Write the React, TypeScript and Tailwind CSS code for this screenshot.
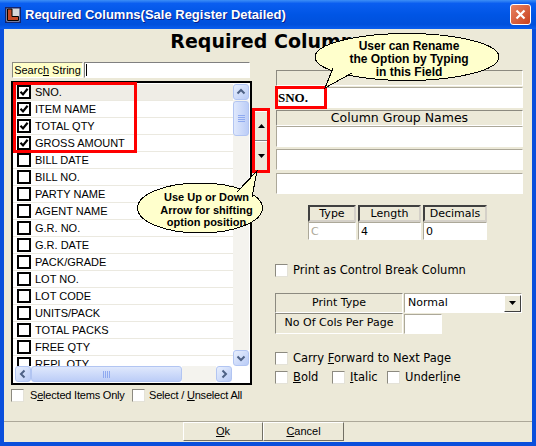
import React from "react";

const items = [
  "SNO.",
  "ITEM NAME",
  "TOTAL QTY",
  "GROSS AMOUNT",
  "BILL DATE",
  "BILL NO.",
  "PARTY NAME",
  "AGENT NAME",
  "G.R. NO.",
  "G.R. DATE",
  "PACK/GRADE",
  "LOT NO.",
  "LOT CODE",
  "UNITS/PACK",
  "TOTAL PACKS",
  "FREE QTY",
  "REPL QTY",
];

// sunken frame used by the edit boxes
const field = "border border-t-[#aca899] border-l-[#aca899] border-b-white border-r-white bg-white";
const label =
  "border border-t-[#8c8a80] border-l-[#8c8a80] border-b-white border-r-white bg-[#ece9d8] flex items-center justify-center";
const dv = "font-['DejaVu_Sans',Verdana,sans-serif]";

function ListCheck({ on }: { on: boolean }) {
  return (
    <span className="w-[14px] h-[14px] border-2 border-black bg-white flex items-center justify-center shrink-0">
      {on && (
        <svg width="10" height="10" viewBox="0 0 10 10">
          <path d="M1.5 4.8 L4 7.4 L8.6 1.8" stroke="black" strokeWidth="2.2" fill="none" />
        </svg>
      )}
    </span>
  );
}

function Check() {
  return (
    <span className="block w-[13px] h-[13px] bg-white border border-t-[#8c8a80] border-l-[#8c8a80] border-b-[#e4e2d8] border-r-[#e4e2d8] shrink-0" />
  );
}

function SbBtn({ dir }: { dir: "up" | "down" | "left" | "right" }) {
  const paths = {
    up: "M3.5 8.5 L7 5 L10.5 8.5",
    down: "M3.5 5.5 L7 9 L10.5 5.5",
    left: "M8.5 3.5 L5 7 L8.5 10.5",
    right: "M5.5 3.5 L9 7 L5.5 10.5",
  };
  return (
    <div className="w-[16px] h-[16px] shrink-0 rounded-[3px] border border-[#b2c5f2] bg-gradient-to-br from-[#e8effd] to-[#b9cbf6] flex items-center justify-center">
      <svg width="14" height="14" viewBox="0 0 14 14">
        <path d={paths[dir]} stroke="#4d6185" strokeWidth="2" fill="none" />
      </svg>
    </div>
  );
}

function Arrow({ up }: { up: boolean }) {
  return (
    <svg width="7" height="4" viewBox="0 0 7 4">
      <path d={up ? "M0 4 L3.5 0 L7 4 Z" : "M0 0 L7 0 L3.5 4 Z"} fill="black" />
    </svg>
  );
}

export default function App() {
  return (
    <div className="relative w-[536px] h-[446px] flex flex-col bg-[#0a4fdc] overflow-hidden font-['Liberation_Sans',Arial,sans-serif] text-black">
      {/* Title bar */}
      <div className="h-[29px] shrink-0 flex items-center pl-[5px] bg-[linear-gradient(to_bottom,#3d8ff6_0%,#0a5ef0_12%,#0055e5_50%,#0050dc_85%,#0a5ef0_100%)]">
        <svg width="16" height="16" viewBox="0 0 16 16">
          <rect x="0" y="0" width="16" height="16" fill="#16246a" />
          <rect x="1" y="1" width="14" height="14" fill="#d8d8d8" />
          <rect x="1" y="1" width="14" height="14" fill="none" stroke="#16246a" />
          <path d="M2.5 2 H7 V9.5 H13.5 V13.5 H2.5 Z" fill="#c44a26" stroke="#000" strokeWidth="1" />
        </svg>
        <span className="ml-[4px] text-white font-bold text-[13px] [text-shadow:1px_1px_0_#0b1f8a]">
          Required Columns(Sale Register Detailed)
        </span>
        <div className="ml-auto mr-[5px] w-[21px] h-[21px] rounded-[3px] border border-white bg-gradient-to-br from-[#e8825f] to-[#c8401c] flex items-center justify-center">
          <svg width="11" height="11" viewBox="0 0 11 11">
            <path d="M1.5 1.5 L9.5 9.5 M9.5 1.5 L1.5 9.5" stroke="white" strokeWidth="2.2" />
          </svg>
        </div>
      </div>

      {/* Body */}
      <div className="flex-1 mx-[4px] mb-[4px] bg-[#ece9d8] flex flex-col">
        <div className={`h-[33px] pt-[2px] text-center font-bold text-[19px] leading-[21px] ${dv}`}>
          Required Columns
        </div>

        <div className="flex items-start pl-[7px]">
          {/* Left column */}
          <div className="w-[241px] flex flex-col">
            <div className="flex h-[16px] ml-[1px]">
              <div className="w-[71px] bg-[#ffffc8] border border-t-[#8c8a80] border-l-[#8c8a80] border-b-white border-r-white flex items-center justify-center text-[11px]">
                Searc<span className="underline">h</span>&nbsp;String
              </div>
              <div className="w-[166px] ml-[1px] bg-white border border-t-[#808080] border-l-[#808080] border-b-white border-r-white flex items-center">
                <span className="ml-[1px] w-[1px] h-[12px] bg-black" />
              </div>
            </div>

            <div className="mt-[3px] h-[304px] border-2 border-black bg-white flex">
              <div className="flex-1 flex flex-col min-w-0">
                <div className="flex-1 overflow-hidden pt-[1px]">
                  {items.map((it, i) => (
                    <div
                      key={it}
                      className={`h-[17px] flex items-center pl-[4px] gap-[4px] border-b border-[#ebe9e0] text-[11px] whitespace-nowrap ${
                        i === 0 ? "bg-[#efede6]" : ""
                      }`}
                    >
                      <ListCheck on={i < 4} />
                      <span>{it}</span>
                    </div>
                  ))}
                </div>
                <div className="h-[16px] mb-[1px] pl-[2px] pr-[1px] flex">
                  <SbBtn dir="left" />
                  <div className="w-[151px] h-[16px] rounded-[3px] border border-[#b2c5f2] bg-gradient-to-b from-[#dfe8fc] to-[#bccdf7] flex items-center justify-center gap-[1px]">
                    {[0, 1, 2, 3].map((k) => (
                      <span key={k} className="w-[1px] h-[7px] bg-[#8faaf0]" />
                    ))}
                  </div>
                  <div className="flex-1 bg-[#f4f3ee]" />
                  <SbBtn dir="right" />
                </div>
              </div>
              <div className="w-[16px] mr-[1px] flex flex-col pt-[1px]">
                <SbBtn dir="up" />
                <div className="flex-1 bg-[#f4f3ee] flex flex-col">
                  <div className="mt-[1px] h-[35px] rounded-[3px] border border-[#b2c5f2] bg-gradient-to-r from-[#dfe8fc] to-[#bccdf7] flex flex-col items-center justify-center gap-[1px]">
                    {[0, 1, 2, 3].map((k) => (
                      <span key={k} className="w-[7px] h-[1px] bg-[#8faaf0]" />
                    ))}
                  </div>
                </div>
                <SbBtn dir="down" />
                <div className="h-[17px]" />
              </div>
            </div>

            <div className="mt-[4px] h-[13px] flex items-center text-[11px] whitespace-nowrap">
              <div className="w-[121px] flex items-center">
                <Check />
                <span className="ml-[6px] tracking-[-0.2px]">
                  S<span className="underline">e</span>lected Items Only
                </span>
              </div>
              <Check />
              <span className="ml-[4px] tracking-[-0.2px]">
                Select / <span className="underline">U</span>nselect All
              </span>
            </div>
          </div>

          {/* Up / Down buttons */}
          <div className="ml-[1px] w-[16px] mt-[49px] flex flex-col">
            <div className="h-[30px] bg-[#ece9d8] border border-t-white border-l-white border-b-[#808080] border-r-[#808080] flex items-center justify-center">
              <Arrow up />
            </div>
            <div className="h-[30px] bg-[#ece9d8] border border-t-white border-l-white border-b-[#808080] border-r-[#808080] flex items-center justify-center">
              <Arrow up={false} />
            </div>
          </div>

          {/* Right column */}
          <div className={`ml-[7px] w-[247px] mt-[8px] flex flex-col ${dv}`}>
            <div className={`h-[16px] ${label}`} />
            <div className={`mt-[1px] h-[21px] ${field} flex items-center pl-[1px]`}>
              <span className="font-['Liberation_Serif',serif] font-bold text-[13px]">SNO.</span>
            </div>
            <div className={`mt-[2px] h-[16px] ${label} text-[12.5px] leading-[14px]`}>Column Group Names</div>
            <div className={`h-[21px] ${field}`} />
            <div className={`mt-[2px] h-[21px] ${field}`} />
            <div className={`mt-[3px] h-[21px] ${field}`} />

            <div className="mt-[11px] ml-[32px] flex gap-[2px] text-[11px]">
              {[
                { h: "Type", v: "C", w: "w-[48px]" },
                { h: "Length", v: "4", w: "w-[63px]" },
                { h: "Decimals", v: "0", w: "w-[64px]" },
              ].map((c) => (
                <div key={c.h} className={`${c.w} flex flex-col`}>
                  <div className="h-[17px] bg-[#ece9d8] border-2 border-t-[#404040] border-l-[#404040] border-b-[#d4d0c8] border-r-[#d4d0c8] flex items-center justify-center leading-none">
                    {c.h}
                  </div>
                  <div className={`h-[18px] ${field} flex items-center pl-[2px] leading-none`}>
                    <span className={c.h === "Type" ? "text-[#aca899]" : ""}>{c.v}</span>
                  </div>
                </div>
              ))}
            </div>

            <div className="mt-[24px] -ml-[1px] h-[13px] flex items-center text-[11.5px]">
              <Check />
              <span className="ml-[5px]">Print as Control Break Column</span>
            </div>

            <div className="mt-[16px] -ml-[1px] flex text-[11px]">
              <div className="flex flex-col">
                <div className={`w-[128px] h-[20px] ${label}`}>Print Type</div>
                <div className={`w-[128px] h-[21px] ${label}`}>No Of Cols Per Page</div>
              </div>
              <div className="flex flex-col ml-[1px]">
                <div className={`w-[118px] h-[20px] ${field} flex items-center`}>
                  <span className="flex-1 pl-[3px] pt-[1px]">Normal</span>
                  <div className="w-[17px] h-[17px] bg-[#ece9d8] border border-t-white border-l-white border-b-[#404040] border-r-[#404040] flex items-center justify-center">
                    <Arrow up={false} />
                  </div>
                </div>
                <div className={`mt-[1px] w-[38px] h-[20px] ${field}`} />
              </div>
            </div>

            <div className="mt-[18px] -ml-[1px] h-[13px] flex items-center text-[11.5px]">
              <Check />
              <span className="ml-[5px]">
                Carry <span className="underline">F</span>orward to Next Page
              </span>
            </div>
            <div className="mt-[6px] -ml-[1px] h-[13px] flex items-center text-[11.5px]">
              <div className="w-[57px] flex items-center">
                <Check />
                <span className="ml-[5px]">
                  <span className="underline">B</span>old
                </span>
              </div>
              <div className="w-[55px] flex items-center">
                <Check />
                <span className="ml-[5px]">
                  <span className="underline">I</span>talic
                </span>
              </div>
              <div className="flex items-center">
                <Check />
                <span className="ml-[5px]">
                  Underl<span className="underline">i</span>ne
                </span>
              </div>
            </div>
          </div>
        </div>

        {/* Buttons */}
        <div className="mt-auto border-t border-[#aca899] flex pl-[179px] pb-[1px] text-[11px]">
          <div className="w-[80px] h-[19px] bg-[#ece9d8] border border-t-white border-l-white border-b-[#716f64] border-r-[#716f64] flex items-center justify-center">
            <span>
              <span className="underline">O</span>k
            </span>
          </div>
          <div className="w-[81px] h-[19px] bg-[#ece9d8] border border-t-white border-l-white border-b-[#716f64] border-r-[#716f64] flex items-center justify-center">
            <span>
              <span className="underline">C</span>ancel
            </span>
          </div>
        </div>
      </div>

      {/* Red highlight boxes */}
      <div className="absolute left-[13px] top-[82px] w-[124px] h-[71px] border-[3px] border-[#ff0000]" />
      <div className="absolute left-[252px] top-[108px] w-[18px] h-[65px] border-[3px] border-[#ff0000]" />
      <div className="absolute left-[275px] top-[86px] w-[52px] h-[23px] border-[3px] border-[#ff0000]" />

      {/* Callouts */}
      <svg className="absolute left-0 top-0 pointer-events-none" width="536" height="446" viewBox="0 0 536 446" shapeRendering="crispEdges">
        <ellipse cx="407" cy="57" rx="92" ry="23.5" fill="#ffffcc" stroke="#000" strokeWidth="1" />
        <path d="M333 68 L325 88 L352 73" fill="#ffffcc" stroke="#000" strokeWidth="1" />
        <ellipse cx="200" cy="208" rx="62.5" ry="25" fill="#ffffcc" stroke="#000" strokeWidth="1" />
        <path d="M237 192 L257 171 L252 197" fill="#ffffcc" stroke="#000" strokeWidth="1" />
      </svg>
      <div className="absolute left-[329px] top-[40px] w-[160px] text-center font-bold text-[12px] leading-[13px] whitespace-nowrap">
        User can Rename
        <br />
        the Option by Typing
        <br />
        in this Field
      </div>
      <div className="absolute left-[146px] top-[191px] w-[121px] text-center font-bold text-[11px] leading-[12.5px] whitespace-nowrap">
        Use Up or Down
        <br />
        Arrow for shifting
        <br />
        option position
      </div>
    </div>
  );
}
